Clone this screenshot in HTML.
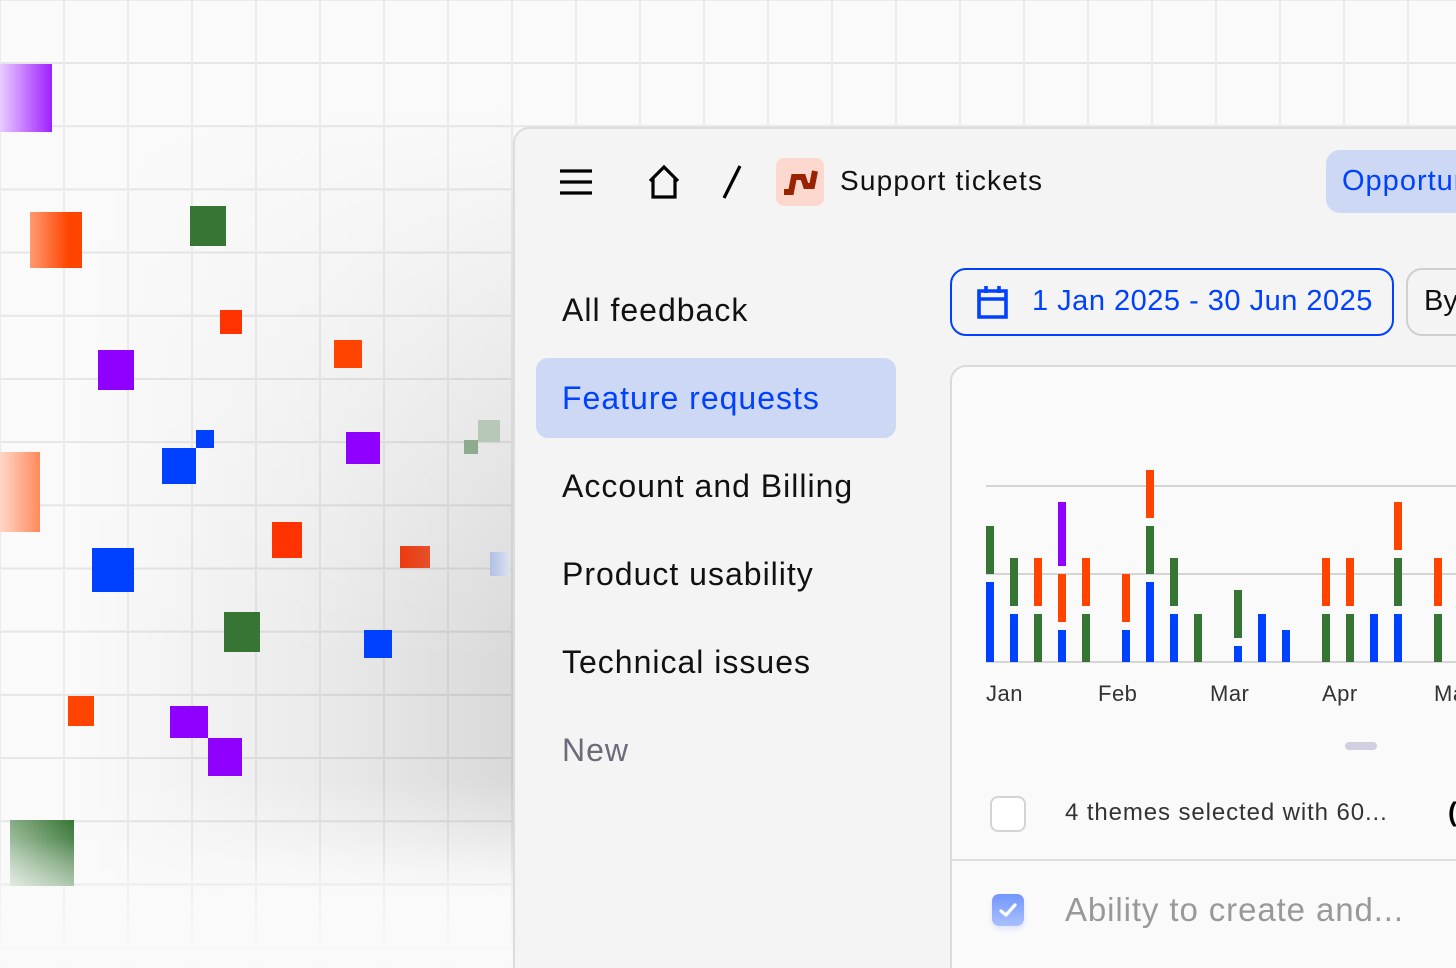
<!DOCTYPE html>
<html><head><meta charset="utf-8"><style>
*{margin:0;padding:0;box-sizing:border-box}
html,body{width:1456px;height:968px;overflow:hidden}
body{position:relative;background:#fafafa;font-family:"Liberation Sans",sans-serif}
.grid{position:absolute;left:0;top:0;width:1456px;height:968px;
background-image:linear-gradient(to right,#ebebeb 2px,transparent 2px),linear-gradient(to bottom,#e6e6e6 2px,transparent 2px);
background-size:64px 63.2px;background-position:63px 62px}
.shade{position:absolute;left:0;top:100px;width:514px;height:800px;
background:linear-gradient(to right,rgba(0,0,0,0) 15%,rgba(0,0,0,0.06) 60%,rgba(0,0,0,0.13));
-webkit-mask-image:linear-gradient(to bottom,transparent,#000 70%,#000 85%,transparent);mask-image:linear-gradient(to bottom,transparent,#000 70%,#000 85%,transparent)}
.fade{position:absolute;left:0;top:840px;width:560px;height:128px;background:linear-gradient(to bottom,rgba(250,250,250,0),rgba(250,250,250,0.95))}
.s{position:absolute}
.panel{position:absolute;left:513px;top:127px;width:943px;height:841px;background:#f4f4f4;border:2px solid #dcdcdc;border-right:none;border-bottom:none;border-radius:16px 0 0 0}
.t{position:absolute;white-space:nowrap;line-height:1}
.bar{position:absolute;width:8px}
.b{background:#0040ff}.g{background:#377535}.o{background:#ff4400}.p{background:#8f00ff}
</style></head><body>
<div class="grid"></div>
<div class="shade"></div>
<div class="s" style="left:0;top:64px;width:52px;height:68px;background:linear-gradient(to right,#e8ccff,#a020ff)"></div>
<div class="s" style="left:30px;top:212px;width:52px;height:56px;background:linear-gradient(to right,#ff9a70,#ff4400 75%)"></div>
<div class="s" style="left:190px;top:206px;width:36px;height:40px;background:#377535"></div>
<div class="s" style="left:220px;top:310px;width:22px;height:24px;background:#ff3300"></div>
<div class="s" style="left:98px;top:350px;width:36px;height:40px;background:#8f00ff"></div>
<div class="s" style="left:334px;top:340px;width:28px;height:28px;background:#ff4400"></div>
<div class="s" style="left:196px;top:430px;width:18px;height:18px;background:#0040ff"></div>
<div class="s" style="left:162px;top:448px;width:34px;height:36px;background:#0040ff"></div>
<div class="s" style="left:346px;top:432px;width:34px;height:32px;background:#8f00ff"></div>
<div class="s" style="left:478px;top:420px;width:22px;height:22px;background:#b7c9b6"></div>
<div class="s" style="left:464px;top:440px;width:14px;height:14px;background:#8fab8e"></div>
<div class="s" style="left:0;top:452px;width:40px;height:80px;background:linear-gradient(to right,#ffd6c8,#ff8a5c)"></div>
<div class="s" style="left:272px;top:522px;width:30px;height:36px;background:#ff3300"></div>
<div class="s" style="left:400px;top:546px;width:30px;height:22px;background:linear-gradient(to right,#ec3a10,#e6502a)"></div>
<div class="s" style="left:490px;top:552px;width:20px;height:24px;background:linear-gradient(to right,#b0bfe8,#dde2ef)"></div>
<div class="s" style="left:92px;top:548px;width:42px;height:44px;background:#0040ff"></div>
<div class="s" style="left:224px;top:612px;width:36px;height:40px;background:#377535"></div>
<div class="s" style="left:364px;top:630px;width:28px;height:28px;background:#0040ff"></div>
<div class="s" style="left:68px;top:696px;width:26px;height:30px;background:#ff4400"></div>
<div class="s" style="left:170px;top:706px;width:38px;height:32px;background:#8f00ff"></div>
<div class="s" style="left:208px;top:738px;width:34px;height:38px;background:#8f00ff"></div>
<div class="s" style="left:10px;top:820px;width:64px;height:66px;background:linear-gradient(to top right,#d6e3d5,#377535)"></div>
<div class="fade"></div>

<div class="panel"></div>
<svg class="s" style="left:558px;top:168px" width="36" height="28"><path d="M2 3H34M2 14H34M2 25H34" stroke="#000" stroke-width="3.2"/></svg>
<svg class="s" style="left:646px;top:164px" width="36" height="36"><path d="M4 17L18 3L32 17M7 14V33H29V14" fill="none" stroke="#000" stroke-width="3.2"/></svg>
<svg class="s" style="left:718px;top:164px" width="28" height="36"><path d="M22 2L6 34" stroke="#000" stroke-width="3.2"/></svg>
<div class="s" style="left:776px;top:158px;width:48px;height:48px;background:#fdd8cf;border-radius:8px"></div>
<svg class="s" style="left:776px;top:158px" width="48" height="48"><path d="M8 34H15L18 19H27L30 28H36L39 13" fill="none" stroke="#992200" stroke-width="6"/></svg>
<div class="t" style="left:840px;top:167px;font-size:28px;color:#111;letter-spacing:1.2px">Support tickets</div>
<div class="s" style="left:1326px;top:150px;width:200px;height:63px;background:#cdd8f5;border-radius:14px"></div>
<div class="t" style="left:1342px;top:167px;font-size:29px;color:#0040ff;letter-spacing:1px">Opportunities</div>
<div class="t" style="left:562px;top:294px;font-size:32px;color:#111;letter-spacing:1px">All feedback</div>
<div class="s" style="left:536px;top:358px;width:360px;height:80px;background:#cdd8f5;border-radius:12px"></div>
<div class="t" style="left:562px;top:382px;font-size:32px;color:#0040ff;letter-spacing:1px">Feature requests</div>
<div class="t" style="left:562px;top:470px;font-size:32px;color:#111;letter-spacing:1px">Account and Billing</div>
<div class="t" style="left:562px;top:558px;font-size:32px;color:#111;letter-spacing:1px">Product usability</div>
<div class="t" style="left:562px;top:646px;font-size:32px;color:#111;letter-spacing:1px">Technical issues</div>
<div class="t" style="left:562px;top:734px;font-size:32px;color:#6b6b7b;letter-spacing:1px">New</div>
<div class="s" style="left:950px;top:268px;width:444px;height:68px;border:2px solid #0040ff;border-radius:16px"></div>
<svg class="s" style="left:975px;top:283px" width="36" height="36"><path d="M4 8H31V34H4ZM4 16H31M11 3V10M24 3V10" fill="none" stroke="#0040ff" stroke-width="3.6"/></svg>
<div class="t" style="left:1032px;top:287px;font-size:29px;color:#0040ff;letter-spacing:0.5px">1 Jan 2025 - 30 Jun 2025</div>
<div class="s" style="left:1406px;top:268px;width:120px;height:68px;border:2px solid #cfcfcf;border-radius:16px"></div>
<div class="t" style="left:1424px;top:287px;font-size:29px;color:#111">By</div>
<div class="s" style="left:950px;top:365px;width:506px;height:603px;background:#fafafa;border:2px solid #dadada;border-right:none;border-bottom:none;border-radius:16px 0 0 0"></div>
<div class="s" style="left:986px;top:485px;width:480px;height:2px;background:#d6d6d6"></div>
<div class="s" style="left:986px;top:573px;width:480px;height:2px;background:#d6d6d6"></div>
<div class="s" style="left:986px;top:661px;width:480px;height:2px;background:#d6d6d6"></div>
<div class="bar g" style="left:986px;top:526px;height:48px"></div><div class="bar b" style="left:986px;top:582px;height:80px"></div>
<div class="bar g" style="left:1010px;top:558px;height:48px"></div><div class="bar b" style="left:1010px;top:614px;height:48px"></div>
<div class="bar o" style="left:1034px;top:558px;height:48px"></div><div class="bar g" style="left:1034px;top:614px;height:48px"></div>
<div class="bar p" style="left:1058px;top:502px;height:64px"></div><div class="bar o" style="left:1058px;top:574px;height:48px"></div><div class="bar b" style="left:1058px;top:630px;height:32px"></div>
<div class="bar o" style="left:1082px;top:558px;height:48px"></div><div class="bar g" style="left:1082px;top:614px;height:48px"></div>
<div class="bar o" style="left:1122px;top:574px;height:48px"></div><div class="bar b" style="left:1122px;top:630px;height:32px"></div>
<div class="bar o" style="left:1146px;top:470px;height:48px"></div><div class="bar g" style="left:1146px;top:526px;height:48px"></div><div class="bar b" style="left:1146px;top:582px;height:80px"></div>
<div class="bar g" style="left:1170px;top:558px;height:48px"></div><div class="bar b" style="left:1170px;top:614px;height:48px"></div>
<div class="bar g" style="left:1194px;top:614px;height:48px"></div>
<div class="bar g" style="left:1234px;top:590px;height:48px"></div><div class="bar b" style="left:1234px;top:646px;height:16px"></div>
<div class="bar b" style="left:1258px;top:614px;height:48px"></div>
<div class="bar b" style="left:1282px;top:630px;height:32px"></div>
<div class="bar o" style="left:1322px;top:558px;height:48px"></div><div class="bar g" style="left:1322px;top:614px;height:48px"></div>
<div class="bar o" style="left:1346px;top:558px;height:48px"></div><div class="bar g" style="left:1346px;top:614px;height:48px"></div>
<div class="bar b" style="left:1370px;top:614px;height:48px"></div>
<div class="bar o" style="left:1394px;top:502px;height:48px"></div><div class="bar g" style="left:1394px;top:558px;height:48px"></div><div class="bar b" style="left:1394px;top:614px;height:48px"></div>
<div class="bar o" style="left:1434px;top:558px;height:48px"></div><div class="bar g" style="left:1434px;top:614px;height:48px"></div>
<div class="t" style="left:986px;top:683px;font-size:22px;color:#333;letter-spacing:0.5px">Jan</div>
<div class="t" style="left:1098px;top:683px;font-size:22px;color:#333;letter-spacing:0.5px">Feb</div>
<div class="t" style="left:1210px;top:683px;font-size:22px;color:#333;letter-spacing:0.5px">Mar</div>
<div class="t" style="left:1322px;top:683px;font-size:22px;color:#333;letter-spacing:0.5px">Apr</div>
<div class="t" style="left:1434px;top:683px;font-size:22px;color:#333;letter-spacing:0.5px">May</div>
<div class="s" style="left:1345px;top:742px;width:32px;height:8px;background:#d2d0e0;border-radius:4px"></div>
<div class="s" style="left:990px;top:796px;width:36px;height:36px;background:#fff;border:2px solid #d4d4d4;border-radius:8px"></div>
<div class="t" style="left:1065px;top:801px;font-size:24px;color:#333;letter-spacing:0.9px">4 themes selected with 60...</div>
<div class="t" style="left:1448px;top:799px;font-size:27px;color:#000;font-weight:bold">(</div>
<div class="s" style="left:952px;top:859px;width:504px;height:2px;background:#dcdcdc"></div>
<div class="s" style="left:992px;top:894px;width:32px;height:32px;border-radius:7px;background:linear-gradient(#7396ff,#a9c0ff);box-shadow:0 3px 5px rgba(80,110,255,0.15)"></div>
<svg class="s" style="left:992px;top:894px" width="32" height="32"><path d="M9 17L14 21L23 11" fill="none" stroke="#fff" stroke-width="3.2" stroke-linecap="round" stroke-linejoin="round"/></svg>
<div class="t" style="left:1065px;top:893px;font-size:33px;color:#999;letter-spacing:0.9px">Ability to create and...</div>
</body></html>
